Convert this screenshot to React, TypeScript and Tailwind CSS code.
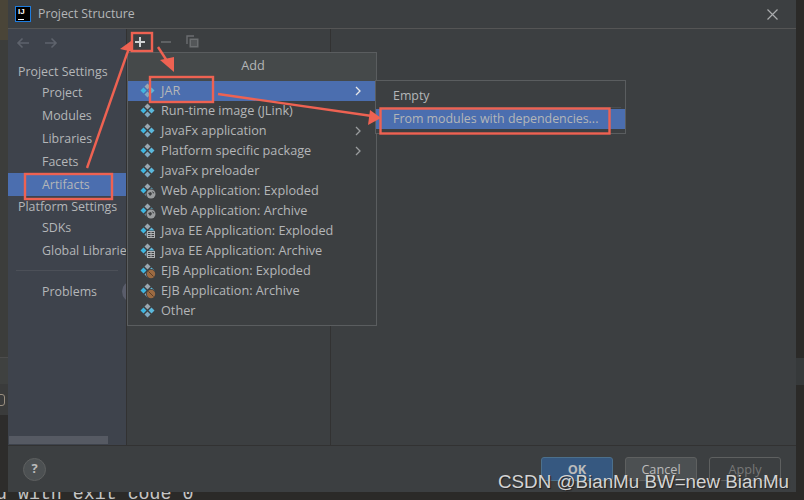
import React from 'react';

const uiFont = "[font-family:'Open_Sans','Noto_Sans',sans-serif]";

type Badge = 'web' | 'ee' | 'ejb' | 'none';

interface MenuItem {
  label: string;
  badge?: Badge;
  chevron?: boolean;
  selected?: boolean;
}

const menuItems: MenuItem[] = [
  { label: 'JAR', chevron: true, selected: true },
  { label: 'Run-time image (JLink)' },
  { label: 'JavaFx application', chevron: true },
  { label: 'Platform specific package', chevron: true },
  { label: 'JavaFx preloader' },
  { label: 'Web Application: Exploded', badge: 'web' },
  { label: 'Web Application: Archive', badge: 'web' },
  { label: 'Java EE Application: Exploded', badge: 'ee' },
  { label: 'Java EE Application: Archive', badge: 'ee' },
  { label: 'EJB Application: Exploded', badge: 'ejb' },
  { label: 'EJB Application: Archive', badge: 'ejb' },
  { label: 'Other' },
];

const ArtifactIcon = ({ badge = 'none' }: { badge?: Badge }) => (
  <svg width="16" height="16" viewBox="0 0 16 16" className="shrink-0">
    <path d="M7.5 0.5 L10.5 3.5 L7.5 6.5 L4.5 3.5 Z" fill="#9aa7b0" />
    <path d="M3.5 4.5 L6.5 7.5 L3.5 10.5 L0.5 7.5 Z" fill="#40b6e0" />
    <path d="M11.5 4.5 L14.5 7.5 L11.5 10.5 L8.5 7.5 Z" fill="#5cb8dc" />
    <path d="M7.5 8.5 L10.5 11.5 L7.5 14.5 L4.5 11.5 Z" fill="#7fa8c0" />
    {badge === 'web' && (
      <g>
        <circle cx="11" cy="11" r="5.5" fill="#3c3f41" />
        <circle cx="11" cy="11" r="4.5" fill="#9a9d9f" />
        <path d="M8 10 L11 9 L12 11 L10 13 Z M12 8 L14.5 10 L13 10.5 Z" fill="#3c3f41" />
      </g>
    )}
    {badge === 'ee' && (
      <g>
        <rect x="6.5" y="7.5" width="9" height="8" fill="#3c3f41" />
        <rect x="7.5" y="8.5" width="7" height="6" fill="none" stroke="#aeb0b2" strokeWidth="1" />
        <path d="M7.5 10.5 H14.5 M11 8.5 V14.5 M7.5 12.5 H14.5" stroke="#aeb0b2" strokeWidth="1" />
      </g>
    )}
    {badge === 'ejb' && (
      <g>
        <circle cx="11" cy="11" r="5" fill="#3c3f41" />
        <circle cx="11" cy="11" r="4.2" fill="#9b6a42" />
        <path d="M8.5 8.5 L13.5 13.5" stroke="#5e3f26" strokeWidth="1" />
      </g>
    )}
  </svg>
);

const Chevron = ({ color }: { color: string }) => (
  <svg width="8" height="10" viewBox="0 0 8 10" className="shrink-0">
    <path d="M2 1 L6 5 L2 9" fill="none" stroke={color} strokeWidth="1.3" />
  </svg>
);

const SideRow = ({ label, selected, group }: { label: string; selected?: boolean; group?: boolean }) => (
  <div
    className={`flex items-center whitespace-nowrap pt-[2px] text-[12.4px] text-[#b4b6b8] ${group ? 'h-5 pl-[10px]' : 'h-[23px] pl-[34px]'} ${
      selected ? 'bg-[#4b6eaf]' : ''
    }`}
  >
    {label}
  </div>
);

const Annotations = () => (
  <svg width="804" height="500" viewBox="0 0 804 500" className="absolute left-0 top-0">
    <g fill="none" stroke="#ee6252" strokeWidth="2.4">
      <rect x="132" y="33" width="20" height="18" />
      <rect x="150" y="77" width="63" height="25" />
      <rect x="25" y="174" width="87" height="25" />
      <rect x="380.5" y="108.5" width="229" height="25" />
    </g>
    <g stroke="#ee6252" strokeWidth="2.4" fill="none">
      <path d="M87 168 L129 48" />
      <path d="M158 47 L169 64" />
      <path d="M218 94 L372 116" />
    </g>
    <g fill="#ee6252">
      <path d="M131 41 L120 49 L133 52 Z" />
      <path d="M174 72 L160 60 L174 57 Z" />
      <path d="M381 118 L370 110 L368 125 Z" />
    </g>
  </svg>
);

export default function App() {
  return (
    <div className={`relative flex h-[500px] w-[804px] flex-col overflow-hidden bg-[#2b2a28] text-[12.7px] ${uiFont}`}>
      <div className="flex h-[492px]">
        {/* IDE window showing behind the dialog */}
        <div className="flex w-2 flex-col">
          <div className="h-10 bg-[#4a4538]" />
          <div className="h-[317px] bg-[#3c3d3b]" />
          <div className="h-[27px] border-t border-[#4c4c4c] bg-[#3f4140]" />
          <div className="flex h-[31px] items-center bg-[#3a3b3b]">
            <div className="ml-[-4px] h-[12px] w-[9px] rounded-[3px] border border-[#9a8f80]" />
          </div>
          <div className="flex-1 bg-[#2d2c2b]" />
        </div>

        {/* Dialog */}
        <div className="flex w-[788px] flex-col bg-[#3c3f41]">
          <div className="flex h-[29px] shrink-0 items-center border-b border-[#555555] pl-[7px] pr-[18px]">
            <div className="flex h-4 w-4 flex-col justify-between border border-[#1e7de0] bg-black px-[2px] pb-[1px] pt-[1px]">
              <span className="text-[8px] font-bold leading-[8px] text-white [font-family:'Liberation_Sans',sans-serif]">IJ</span>
              <span className="h-px w-[6px] bg-white" />
            </div>
            <span className="ml-[7px] text-[12.3px] text-[#b4b6b8]">Project Structure</span>
            <svg width="11" height="11" viewBox="0 0 11 11" className="ml-auto">
              <path d="M0.5 0.5 L10.5 10.5 M10.5 0.5 L0.5 10.5" stroke="#a9abad" strokeWidth="1.2" />
            </svg>
          </div>

          <div className="flex min-h-0 flex-1">
            {/* Sidebar */}
            <div className="relative flex w-[119px] shrink-0 flex-col overflow-hidden border-r border-[#323232] bg-[#3e434c]">
              <div className="flex h-8 shrink-0 items-start gap-[14px] pl-2 pt-[8px]">
                <svg width="14" height="12" viewBox="0 0 14 12">
                  <path d="M13 6 H2 M6.5 1.5 L2 6 L6.5 10.5" fill="none" stroke="#5e636c" strokeWidth="1.6" />
                </svg>
                <svg width="14" height="12" viewBox="0 0 14 12">
                  <path d="M1 6 H12 M7.5 1.5 L12 6 L7.5 10.5" fill="none" stroke="#5e636c" strokeWidth="1.6" />
                </svg>
              </div>
              <SideRow label="Project Settings" group />
              <SideRow label="Project" />
              <SideRow label="Modules" />
              <SideRow label="Libraries" />
              <SideRow label="Facets" />
              <SideRow label="Artifacts" selected />
              <SideRow label="Platform Settings" group />
              <SideRow label="SDKs" />
              <SideRow label="Global Libraries" />
              <div className="mx-[8px] mb-[9px] mt-[8px] h-px shrink-0 bg-[#4c5058]" />
              <div className="relative">
                <SideRow label="Problems" />
                <div className="absolute left-[114px] top-[1px] h-[21px] w-[21px] rounded-full bg-[#5a5d6b]" />
              </div>
              <div className="mt-auto ml-px h-2 w-[99px] bg-[#565a63]" />
              <div className="h-px" />
            </div>

            {/* Artifact list */}
            <div className="w-[204px] shrink-0 border-r border-[#323232]">
              <div className="flex h-[23px] items-center gap-[14px] pl-[7px] pt-[2px]">
                <svg width="12" height="12" viewBox="0 0 12 12">
                  <path d="M6 1 V11 M1 6 H11" stroke="#d0d2d3" strokeWidth="2" />
                </svg>
                <svg width="12" height="12" viewBox="0 0 12 12">
                  <path d="M1 6 H11" stroke="#5f6264" strokeWidth="2" />
                </svg>
                <svg width="13" height="13" viewBox="0 0 13 13">
                  <path d="M1 9 V1 H8" fill="none" stroke="#6b6e70" strokeWidth="1.4" />
                  <rect x="3.5" y="3.5" width="9" height="9" fill="#6b6e70" />
                  <path d="M5 6 H11 M5 8 H11 M5 10 H11" stroke="#3c3f41" strokeWidth="1" />
                </svg>
              </div>
            </div>
            <div className="flex-1" />
          </div>

          {/* Footer */}
          <div className="flex h-[47px] shrink-0 items-center border-t border-[#323232] pl-[15px] pr-[15px]">
            <div className="flex h-[23px] w-[23px] items-center justify-center rounded-full border border-[#5e6060] bg-[#4c5052] text-[13px] font-bold text-[#bbbbbb]">
              ?
            </div>
            <div className="ml-auto flex gap-[12px]">
              <button className="h-6 w-[72px] rounded-[3px] border border-[#4c708c] bg-[#365880] pt-[2px] font-bold text-[#bbbbbb]">OK</button>
              <button className="h-6 w-[72px] rounded-[3px] border border-[#5e6060] bg-[#4c5052] pt-[2px] text-[#bbbbbb]">Cancel</button>
              <button className="h-6 w-[72px] rounded-[3px] border border-[#5e6060] pt-[2px] text-[#777777]">Apply</button>
            </div>
          </div>
        </div>

        <div className="flex w-2 flex-col">
          <div className="h-[358px]" />
          <div className="h-[27px] bg-[#36393a]" />
        </div>
      </div>

      {/* Console line cut off by the dialog */}
      <div className="h-2 overflow-hidden">
        <div className="ml-[-4px] mt-[-8px] whitespace-pre text-[18.3px] leading-[20px] text-[#c4c4c4] [font-family:'Liberation_Mono',monospace]">
          d with exit code 0
        </div>
      </div>

      {/* Add popup */}
      <div className="absolute left-[127px] top-[52px] h-[274px] w-[250px] border border-[#5a5d5f] bg-[#3c3f41]">
        <div className="flex h-7 items-center justify-center bg-[#45494a] pb-[2px] pl-[2px] text-[#b4b6b8]">Add</div>
        {menuItems.map((item) => (
          <div
            key={item.label}
            className={`flex h-5 items-center pl-[12px] pr-[14px] text-[#b4b6b8] ${item.selected ? 'bg-[#4b6eaf]' : ''}`}
          >
            <ArtifactIcon badge={item.badge} />
            <span className="ml-[5px] whitespace-nowrap">{item.label}</span>
            {item.chevron && (
              <span className="ml-auto flex">
                <Chevron color={item.selected ? '#e8e8e8' : '#9a9c9e'} />
              </span>
            )}
          </div>
        ))}
      </div>

      {/* JAR submenu */}
      <div className="absolute left-[375px] top-[80px] h-[54px] w-[251px] border border-[#5a5d5f] bg-[#3c3f41] pt-[4px] text-[12.4px] text-[#b4b6b8]">
        <div className="flex h-[22px] items-center pl-[17px]">Empty</div>
        <div className="mx-[4px] mb-px h-px bg-[#4a4d4f]" />
        <div className="flex h-5 items-center whitespace-nowrap bg-[#4b6eaf] pl-[17px]">From modules with dependencies...</div>
      </div>

      <Annotations />

      <div className="absolute left-[498px] top-[471px] whitespace-nowrap text-[18.8px] leading-[22px] text-[#d4d4d4] [font-family:'Liberation_Sans',sans-serif] [text-shadow:1px_1px_1px_#222]">
        CSDN @BianMu BW=new BianMu
      </div>
    </div>
  );
}
